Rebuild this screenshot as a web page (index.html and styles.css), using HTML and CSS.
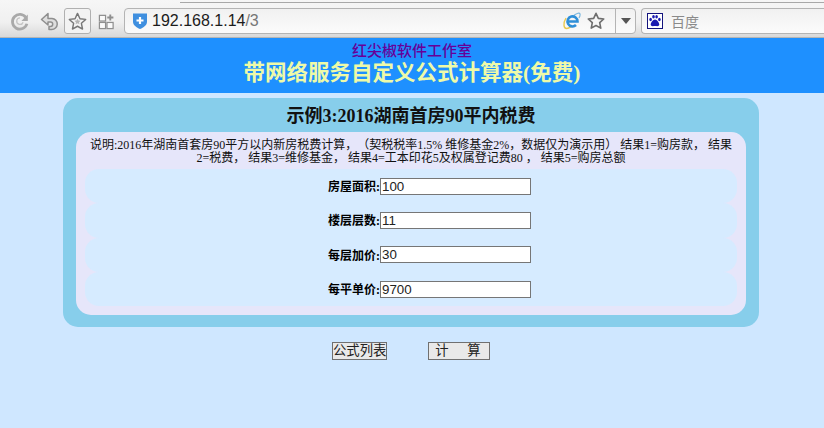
FILE: index.html

```html
<!DOCTYPE html>
<html lang="zh-CN">
<head>
<meta charset="utf-8">
<title>带网络服务自定义公式计算器</title>
<link rel="stylesheet" href="styles.css">
</head>
<body>
<div class="browser-bar">
    <div class="tab-edge"></div>
    <div class="tools">
        <svg class="tool tool-reload" width="22" height="22" viewBox="0 0 24 24"><path d="M18.500 8.500A8 8 0 1 0 19.500 15" fill="none" stroke="#a9a9a9" stroke-width="3"/><path d="M12 8.500a3.600 3.600 0 1 0 3.400 4.800" fill="none" stroke="#c4c4c4" stroke-width="1.400"/><path d="M20.500 5v7h-7z" fill="#a9a9a9"/></svg>
        <svg class="tool tool-back" width="20" height="20" viewBox="0 0 20 20"><path d="M8 2.500 1.500 8.500 8 14v-3h2.500a2.200 2.200 0 0 1 0 4.400H9V18.500h2.500a5.500 5.500 0 0 0 .5-11H8z" fill="#dedede" stroke="#8f8f8f" stroke-width="1.500" stroke-linejoin="round"/></svg>
        <div class="tool-box">
            <svg width="19" height="19" viewBox="0 0 20 20"><path d="m10 1.500 2.600 5.600 6 .7-4.500 4.100 1.200 6L10 15l-5.300 2.900 1.200-6L1.400 7.800l6-.7z" fill="#f4f4f4" stroke="#777" stroke-width="1.500" stroke-linejoin="round"/><path d="m10 7 1 2 2.200.3-1.600 1.500.4 2.200-2-1.100-2 1.100.4-2.200-1.600-1.500L9 9z" fill="#b5b5b5"/></svg>
        </div>
        <svg class="tool tool-grid" width="17" height="17" viewBox="0 0 18 18"><g fill="#fafafa" stroke="#8f8f8f" stroke-width="1.300"><rect x="1.500" y="2.500" width="6.500" height="6"/><rect x="1.500" y="10" width="6.500" height="6.500"/><rect x="9.500" y="10" width="6.500" height="6.500"/></g><path d="M13 1.500v6.500M9.800 4.700h6.500" stroke="#8f8f8f" stroke-width="2"/></svg>
        <div class="address">
            <svg class="shield" width="16" height="18" viewBox="0 0 16 18"><path d="M1 1.500h14V10c0 3-3.500 5.500-7 7-3.500-1.500-7-4-7-7z" fill="#3f8fdf"/><path d="M8 5v7M4.500 8.500h7" stroke="#fff" stroke-width="2.200"/></svg>
            <span class="url">192.168.1.14<span class="url-path">/3</span></span>
            <svg class="ie" width="18" height="18" viewBox="0 0 18 18"><path d="M3 6C0 11 .5 16.500 3.500 16.500c1.500 0 3-1 4.500-1.700" fill="none" stroke="#e9c84f" stroke-width="1.400"/><path d="M11 3.200c3-2 5.500-2.700 6-1.200.3 1-.2 2.500-1 4" fill="none" stroke="#7bb8e0" stroke-width="1.200"/><path d="M5 9.500h9.500A5 5 0 1 0 13 13" fill="none" stroke="#2f8fd8" stroke-width="2.600"/></svg>
            <svg class="star" width="18" height="18" viewBox="0 0 20 20"><path d="m10 1.500 2.600 5.600 6 .7-4.500 4.100 1.200 6L10 15l-5.300 2.900 1.200-6L1.400 7.800l6-.7z" fill="#f6f6f6" stroke="#6e6e6e" stroke-width="1.800" stroke-linejoin="round"/></svg>
            <div class="address-drop"><i class="drop-arrow"></i></div>
        </div>
        <div class="search">
            <svg class="baidu" width="16" height="16" viewBox="0 0 16 16"><rect x=".5" y=".5" width="15" height="15" fill="#fff" stroke="#14147e"/><g fill="#1a1ab0"><ellipse cx="3.600" cy="6.500" rx="1.300" ry="1.700"/><ellipse cx="6.500" cy="3.800" rx="1.300" ry="1.800"/><ellipse cx="9.600" cy="3.800" rx="1.300" ry="1.800"/><ellipse cx="12.400" cy="6.500" rx="1.300" ry="1.700"/><path d="M8 6.500c1.800 0 4.300 3 4.300 5 0 2.300-2.800 1.500-4.300 1.500s-4.300.8-4.300-1.500c0-2 2.500-5 4.300-5z"/></g></svg>
            <span class="search-name">百度</span>
        </div>
    </div>
</div>

<div class="head">
    <div class="studio">红尖椒软件工作室</div>
    <div class="app-name">带网络服务自定义公式计算器(免费)</div>
</div>

<div class="panel">
    <h2 class="panel-title">示例3:2016湖南首房90平内税费</h2>
    <div class="panel-body">
        <p class="note">说明:2016年湖南首套房90平方以内新房税费计算，（契税税率1.5% 维修基金2%，数据仅为演示用） 结果1=购房款， 结果2=税费， 结果3=维修基金， 结果4=工本印花5及权属登记费80 ， 结果5=购房总额</p>
        <div class="field"><label>房屋面积:</label><input type="text" value="100"></div>
        <div class="field"><label>楼层层数:</label><input type="text" value="11"></div>
        <div class="field"><label>每层加价:</label><input type="text" value="30"></div>
        <div class="field"><label>每平单价:</label><input type="text" value="9700"></div>
    </div>
</div>

<div class="actions">
    <button type="button" class="btn">公式列表</button>
    <button type="button" class="btn btn-calc">计　算</button>
</div>
</body>
</html>
```

FILE: styles.css

```css
*{
    box-sizing: border-box;
}
html,body{
    height: 100%;
}
body{
    margin: 0;
    background: #cfe7ff;
    font-family: "Liberation Serif", "Noto Sans CJK SC", serif;
    overflow: hidden;
}

/* browser toolbar */
.browser-bar{
    height: 38px;
    background: linear-gradient(#f6f6f6, #f0f0f0 60%, #d9d9d9);
    border-bottom: 1px solid #b5b5b5;
    font-family: "Liberation Sans", "Noto Sans CJK SC", sans-serif;
}
.tab-edge{
    height: 3px;
    margin-left: 180px;
    border-bottom: 1px solid #a8a8a8;
}
.tools{
    display: flex;
    align-items: center;
    height: 26px;
    margin-top: 5px;
}
.tool{
    flex: none;
}
.tool-reload{
    margin-left: 9px;
}
.tool-back{
    margin-left: 9px;
}
.tool-box{
    display: flex;
    align-items: center;
    justify-content: center;
    width: 27px;
    height: 26px;
    margin-left: 4px;
    border: 1px solid #b0b0b0;
    border-radius: 3px;
    background: #f3f3f3;
}
.tool-grid{
    margin-left: 7px;
}
.address{
    display: flex;
    align-items: center;
    width: 512px;
    height: 26px;
    margin-left: 9px;
    padding-left: 7px;
    border: 1px solid #b4b4b4;
    border-radius: 4px;
    background: linear-gradient(#f1f1f1, #fbfbfb);
}
.shield{
    flex: none;
}
.url{
    margin-left: 4px;
    font-size: 16px;
    color: #1c1c1c;
}
.url-path{
    color: #777;
}
.ie{
    margin-left: auto;
}
.star{
    margin-left: 6px;
    margin-right: 10px;
}
.address-drop{
    display: flex;
    align-items: center;
    justify-content: center;
    width: 20px;
    height: 24px;
    border-left: 1px solid #b4b4b4;
}
.drop-arrow{
    width: 0;
    height: 0;
    border-left: 5px solid transparent;
    border-right: 5px solid transparent;
    border-top: 6px solid #555;
}
.search{
    display: flex;
    align-items: center;
    flex: 1;
    height: 26px;
    margin-left: 5px;
    padding-left: 5px;
    border: 1px solid #b4b4b4;
    border-right: 0;
    border-radius: 4px 0 0 4px;
    background: linear-gradient(#f1f1f1, #fbfbfb);
}
.search-name{
    margin-left: 8px;
    font-size: 14px;
    color: #8a8a8a;
}

/* page header */
.head{
    height: 55px;
    padding-top: 4px;
    background: #1e90ff;
    text-align: center;
}
.studio{
    font-size: 15px;
    line-height: 18px;
    font-weight: 500;
    color: #660099;
}
.app-name{
    font-size: 21.500px;
    line-height: 27px;
    font-weight: bold;
    color: #eefaa8;
}

/* formula panel */
.panel{
    width: 696px;
    height: 229px;
    margin: 5px 0 0 63px;
    padding: 0 13px;
    background: #87ceeb;
    border-radius: 15px;
}
.panel-title{
    margin: 0;
    height: 34px;
    font-size: 18px;
    line-height: 36px;
    text-align: center;
    color: #111;
}
.panel-body{
    height: 183px;
    padding: 0 9px;
    background: #e6e6fa;
    border-radius: 15px;
}
.note{
    margin: 0;
    height: 37px;
    padding: 7px 3px 0;
    font-size: 12px;
    line-height: 13px;
    text-align: center;
    color: #111;
    text-spacing-trim: space-all;
}
.field{
    display: grid;
    grid-template-columns: 295px 1fr;
    align-items: center;
    height: 34.300px;
    background: #d6ebff;
    border-radius: 14px;
}
.field label{
    font-size: 12px;
    font-weight: bold;
    text-align: right;
    color: #000;
}
.field input{
    width: 151px;
    height: 17px;
    margin: 0;
    padding: 0 1px;
    border: 1px solid #767676;
    background: #fff;
    font-family: "Liberation Sans", sans-serif;
    font-size: 13.33px;
    color: #222;
}

.actions{
    display: flex;
    gap: 41px;
    margin: 15px 0 0 332px;
}
.btn{
    height: 18px;
    padding: 0;
    border: 1px solid #707070;
    background: #e9e9e9;
    font-family: "Liberation Sans", "Noto Sans CJK SC", sans-serif;
    font-size: 13.33px;
    line-height: 14px;
    color: #222;
}
.btn-calc{
    width: 62px;
    letter-spacing: 2.67px;
}
```
